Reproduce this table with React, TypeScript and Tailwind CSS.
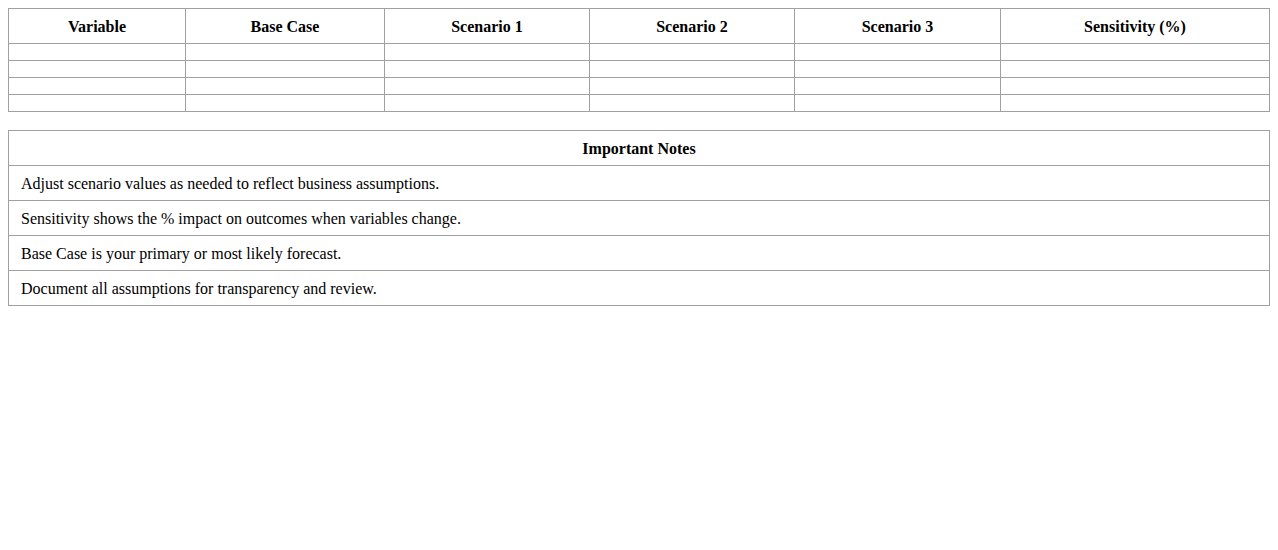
import React from 'react';

const columns = [
  { label: 'Variable', width: 'w-[177px]' },
  { label: 'Base Case', width: 'w-[199px]' },
  { label: 'Scenario 1', width: 'w-[205px]' },
  { label: 'Scenario 2', width: 'w-[205px]' },
  { label: 'Scenario 3', width: 'w-[206px]' },
  { label: 'Sensitivity (%)', width: '' },
];

const notes = [
  'Adjust scenario values as needed to reflect business assumptions.',
  'Sensitivity shows the % impact on outcomes when variables change.',
  'Base Case is your primary or most likely forecast.',
  'Document all assumptions for transparency and review.',
];

export default function App() {
  return (
    <div className="min-h-screen bg-white p-2 text-black text-base font-['Liberation_Serif',_'Times_New_Roman',_serif]">
      <table className="w-full border-collapse table-fixed">
        <thead>
          <tr>
            {columns.map((c) => (
              <th key={c.label} className={`border border-[#a0a0a0] px-2 pt-[9px] pb-[7px] text-center font-bold leading-[18px] ${c.width}`}>
                {c.label}
              </th>
            ))}
          </tr>
        </thead>
        <tbody>
          {[0, 1, 2, 3].map((r) => (
            <tr key={r}>
              {columns.map((c) => (
                <td key={c.label} className="border border-[#a0a0a0] px-2 py-2 h-[17px]"></td>
              ))}
            </tr>
          ))}
        </tbody>
      </table>

      <table className="w-full border-collapse mt-[18px]">
        <thead>
          <tr>
            <th className="border border-[#a0a0a0] px-3 pt-[9px] pb-[7px] text-center font-bold leading-[18px]">Important Notes</th>
          </tr>
        </thead>
        <tbody>
          {notes.map((n) => (
            <tr key={n}>
              <td className="border border-[#a0a0a0] px-3 pt-[9px] pb-[7px] leading-[18px]">{n}</td>
            </tr>
          ))}
        </tbody>
      </table>
    </div>
  );
}
